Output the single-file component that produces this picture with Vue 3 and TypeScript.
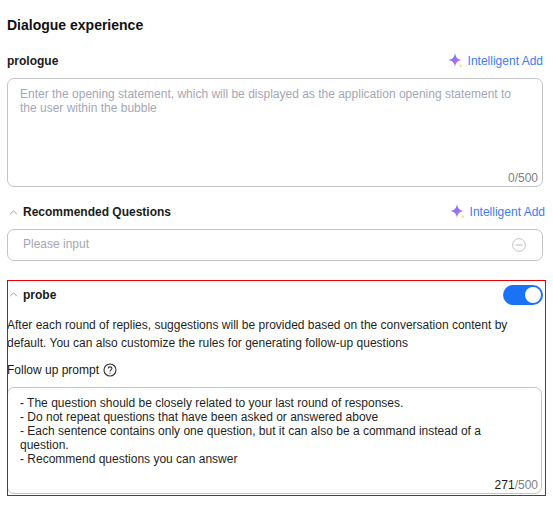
<template>
  <div class="page">
    <h2 class="title">Dialogue experience</h2>

    <div class="row prologue-row">
      <span class="label">prologue</span>
      <a class="smart">
        <svg class="spark" viewBox="0 0 16 16">
          <path d="M7 0C7.6 4.400 9.600 6.400 14 7 9.600 7.600 7.600 9.600 7 14 6.400 9.600 4.400 7.600 0 7 4.400 6.400 6.400 4.400 7 0Z" fill="url(#spark-a)" />
          <path d="M12.8 10.500c.2 1.400.8 2 2.200 2.200-1.400.2-2 .8-2.200 2.300-.2-1.500-.8-2.100-2.300-2.300 1.500-.2 2.100-.8 2.300-2.200Z" fill="#f2dc7c" />
          <defs>
            <linearGradient id="spark-a" x1="0" y1="0" x2="1" y2="1">
              <stop offset="0" stop-color="#3f9bff" />
              <stop offset=".5" stop-color="#9a6cf5" />
              <stop offset="1" stop-color="#ff7fb0" />
            </linearGradient>
          </defs>
        </svg>
        Intelligent Add
      </a>
    </div>
    <div class="box prologue-box">
      <div class="placeholder">Enter the opening statement, which will be displayed as the application opening statement to the user within the bubble</div>
      <div class="count">0/500</div>
    </div>

    <div class="row rec-row">
      <span class="label with-arrow">
        <svg class="arrow" viewBox="0 0 10 6"><path d="M1 5l4-4 4 4" fill="none" stroke="#8a8a8a" stroke-width="1" /></svg>
        Recommended Questions
      </span>
      <a class="smart smart-over">
        <svg class="spark" viewBox="0 0 16 16">
          <path d="M7 0C7.6 4.400 9.600 6.400 14 7 9.600 7.600 7.600 9.600 7 14 6.400 9.600 4.400 7.600 0 7 4.400 6.400 6.400 4.400 7 0Z" fill="url(#spark-a)" />
          <path d="M12.8 10.500c.2 1.400.8 2 2.200 2.200-1.400.2-2 .8-2.200 2.300-.2-1.500-.8-2.100-2.300-2.300 1.500-.2 2.100-.8 2.300-2.200Z" fill="#f2dc7c" />
        </svg>
        Intelligent Add
      </a>
    </div>
    <div class="box input-box">
      <span class="placeholder">Please input</span>
      <svg class="minus" viewBox="0 0 14 14">
        <circle cx="7" cy="7" r="6.400" fill="none" stroke="#c4c4c4" />
        <path d="M3.500 7h7" stroke="#c4c4c4" stroke-width="1.200" />
      </svg>
    </div>

    <section class="probe">
      <div class="row probe-row">
        <span class="label with-arrow">
          <svg class="arrow" viewBox="0 0 10 6"><path d="M1 5l4-4 4 4" fill="none" stroke="#8a8a8a" stroke-width="1" /></svg>
          probe
        </span>
        <span class="switch"><i></i></span>
      </div>
      <p class="desc">After each round of replies, suggestions will be provided based on the conversation content by default. You can also customize the rules for generating follow-up questions</p>
      <div class="follow">
        Follow up prompt
        <svg class="help" viewBox="0 0 14 14">
          <circle cx="7" cy="7" r="6" fill="none" stroke="#333" stroke-width="1.100" />
          <path d="M5.200 5.600c0-2.300 3.700-2.300 3.700-.1 0 1.300-1.900 1.400-1.900 2.900" fill="none" stroke="#333" stroke-width="1.100" />
          <circle cx="7" cy="10.100" r=".7" fill="#333" />
        </svg>
      </div>
      <div class="box prompt-box">
        <div class="prompt-text">
          <div v-for="line in promptLines" :key="line">{{ line }}</div>
        </div>
        <div class="count"><b>271</b>/500</div>
      </div>
    </section>
  </div>
</template>

<script setup lang="ts">
const promptLines: string[] = [
  '- The question should be closely related to your last round of responses.',
  '- Do not repeat questions that have been asked or answered above',
  '- Each sentence contains only one question, but it can also be a command instead of a question.',
  '- Recommend questions you can answer',
];
</script>

<style>
html,
body {
  background: #fff;
}
</style>

<style scoped>
.page {
  width: 553px;
  height: 507px;
  box-sizing: border-box;
  padding: 17px 10px 0 7px;
  font-family: "Liberation Sans", Arial, sans-serif;
  font-size: 12px;
  color: #1a1a1a;
  overflow: hidden;
}

.title {
  margin: 0;
  font-size: 14px;
  line-height: 16px;
  font-weight: 700;
  color: #111;
}

.row {
  display: flex;
  align-items: center;
  justify-content: space-between;
}

.prologue-row {
  margin-top: 21px;
  height: 14px;
}

.rec-row {
  margin-top: 18px;
  height: 14px;
}

.label {
  font-weight: 700;
  line-height: 14px;
  color: #1a1a1a;
}

.with-arrow {
  display: flex;
  align-items: center;
  gap: 5px;
}

.arrow {
  width: 9px;
  height: 5px;
  margin-left: 2px;
}

.smart {
  display: flex;
  align-items: center;
  gap: 4px;
  color: #3b7cff;
  line-height: 14px;
}

.smart-over {
  margin-right: -2px;
}

.spark {
  width: 16px;
  height: 16px;
  margin-left: -1px;
}

.box {
  box-sizing: border-box;
  border: 1px solid #c4c4c4;
  border-radius: 7px;
  position: relative;
  background: #fff;
}

.placeholder {
  color: #a4a7b5;
  line-height: 14px;
}

.prologue-box {
  margin-top: 10px;
  height: 109px;
  padding: 8px 12px;
}

.count {
  position: absolute;
  right: 4px;
  bottom: 1px;
  color: #7f7f7f;
  line-height: 14px;
}

.count b {
  font-weight: 400;
  color: #1a1a1a;
}

.input-box {
  margin-top: 10px;
  height: 32px;
  padding: 0 16px 0 15px;
  display: flex;
  align-items: center;
  justify-content: space-between;
}

.input-box .placeholder {
  margin-bottom: 2px;
}

.minus {
  width: 14px;
  height: 14px;
}

.probe {
  position: relative;
  margin-top: 19px;
  width: 539px;
  height: 216px;
  box-sizing: border-box;
  overflow: hidden;
}

/* red frame lies over the contents, text touches it */
.probe::after {
  content: "";
  position: absolute;
  inset: 0;
  border: 1px solid #e60000;
  pointer-events: none;
}

.probe-row {
  height: 29px;
  padding: 0 3px 0 0;
}

.switch {
  width: 40px;
  height: 20px;
  border-radius: 10px;
  background: #1a73f5;
  display: flex;
  align-items: center;
  justify-content: flex-end;
  padding: 0 2px;
  box-sizing: border-box;
}

.switch i {
  width: 16px;
  height: 16px;
  border-radius: 50%;
  background: #fff;
}

.desc {
  margin: 7px 0 0;
  line-height: 18px;
  color: #1f1f1f;
  width: 530px;
}

.follow {
  margin-top: 11px;
  display: flex;
  align-items: center;
  gap: 4px;
  line-height: 14px;
}

.help {
  width: 14px;
  height: 14px;
}

.prompt-box {
  margin-top: 10px;
  margin-right: 4px;
  height: 107px;
  padding: 8px 12px;
}

.prompt-box .count {
  right: 3px;
}

.prompt-text {
  line-height: 14px;
  color: #1f1f1f;
  width: 490px;
}
</style>
